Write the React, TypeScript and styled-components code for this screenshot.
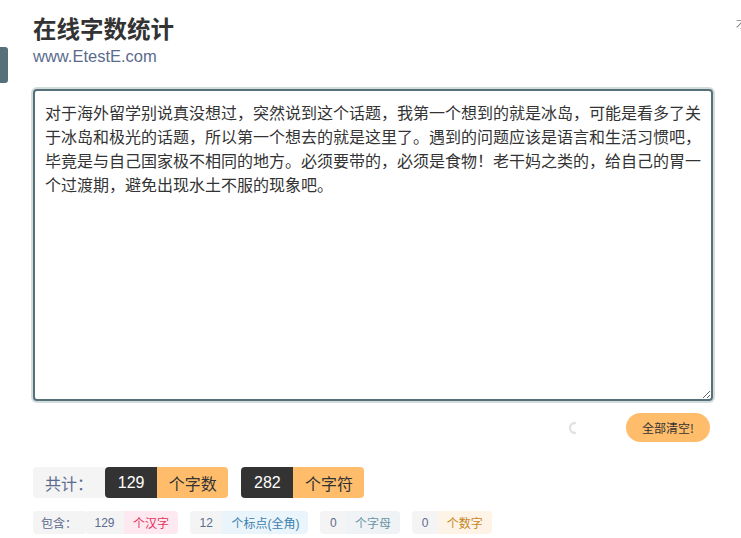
import { useEffect, useRef } from 'react';
import styled, { createGlobalStyle } from 'styled-components';

const GlobalStyle = createGlobalStyle`
  html, body {
    margin: 0;
    padding: 0;
    background: #fff;
    overflow: hidden;
  }
  body {
    font-family: "Liberation Sans", "Noto Sans CJK SC", sans-serif;
    color: #333;
  }
`;

const SOURCE_TEXT =
  '对于海外留学别说真没想过，突然说到这个话题，我第一个想到的就是冰岛，可能是看多了关于冰岛和极光的话题，所以第一个想去的就是这里了。遇到的问题应该是语言和生活习惯吧，毕竟是与自己国家极不相同的地方。必须要带的，必须是食物！老干妈之类的，给自己的胃一个过渡期，避免出现水土不服的现象吧。';

const Page = styled.div`
  width: 680px;
  margin-left: 33px;
  padding-top: 12px;
`;

const SideTab = styled.div`
  position: fixed;
  left: 0;
  top: 47px;
  width: 8px;
  height: 36px;
  background: #557078;
  border-radius: 0 3px 3px 0;
`;

const CornerGlyph = styled.span`
  position: fixed;
  left: 736px;
  top: 15px;
  font-size: 11px;
  color: #777;
  font-family: "Noto Sans CJK SC", sans-serif;
`;

const Header = styled.header`
  display: flex;
  flex-direction: column;
  margin-bottom: 23px;
`;

const Title = styled.h1`
  margin: 0;
  font-family: "Noto Sans CJK SC", sans-serif;
  font-size: 23.5px;
  font-weight: 700;
  line-height: 32px;
  color: #333;
`;

const SiteUrl = styled.div`
  font-family: "Liberation Sans", sans-serif;
  font-size: 16.5px;
  line-height: 20px;
  color: #5b6b8c;
  margin-top: 2px;
`;

const Editor = styled.textarea`
  display: block;
  box-sizing: border-box;
  width: 680px;
  height: 312px;
  margin: 0;
  padding: 9px 8px 10px 10px;
  border: 2px solid #557078;
  border-radius: 4px;
  box-shadow: 0 0 0 2px #d3dcdc;
  outline: none;
  font-family: "Noto Sans CJK SC", sans-serif;
  font-size: 16px;
  line-height: 24px;
  color: #333;
  caret-color: #222;
  background: #fff;
  resize: both;
  overflow: hidden;
`;

const ActionRow = styled.div`
  display: flex;
  justify-content: flex-end;
  align-items: center;
  gap: 45px;
  margin-top: 12px;
  padding-right: 3px;
`;

const Spinner = styled.svg`
  width: 14px;
  height: 14px;
`;

const ClearButton = styled.button`
  height: 29px;
  padding: 0 16px;
  border: none;
  border-radius: 15px;
  background: #ffbd6b;
  color: #333;
  font-family: "Noto Sans CJK SC", sans-serif;
  font-size: 12px;
  cursor: pointer;
`;

const StatRow = styled.div<{ $top: number }>`
  display: flex;
  align-items: center;
  margin-top: ${(p) => p.$top}px;
`;

const GroupList = styled.div<{ $gap: number }>`
  display: flex;
  gap: ${(p) => p.$gap}px;
`;

const Group = styled.div`
  display: flex;
  border-radius: 4px;
  overflow: hidden;
`;

const Cell = styled.span<{ $bg: string; $color: string; $size: number; $h: number; $pad: number }>`
  display: flex;
  align-items: center;
  height: ${(p) => p.$h}px;
  padding: 0 ${(p) => p.$pad}px;
  background: ${(p) => p.$bg};
  color: ${(p) => p.$color};
  font-family: "Liberation Sans", "Noto Sans CJK SC", sans-serif;
  font-size: ${(p) => p.$size}px;
  white-space: nowrap;
`;

const Label = styled(Cell)`
  border-radius: 4px 0 0 4px;
`;

const LABEL = '#5b6b8c';

const totals = [
  { num: '129', unit: '个字数' },
  { num: '282', unit: '个字符' },
];

const details = [
  { num: '129', unit: '个汉字', bg: '#fde9ef', color: '#e3335f' },
  { num: '12', unit: '个标点(全角)', bg: '#eaf4fb', color: '#3b7fae' },
  { num: '0', unit: '个字母', bg: '#eff3f5', color: '#6893a6' },
  { num: '0', unit: '个数字', bg: '#fdf4e7', color: '#c8861d' },
];

export default function App() {
  const ref = useRef<HTMLTextAreaElement>(null);

  useEffect(() => {
    const el = ref.current;
    if (el) {
      el.focus();
      el.setSelectionRange(el.value.length, el.value.length);
    }
  }, []);

  return (
    <>
      <GlobalStyle />
      <SideTab />
      <CornerGlyph>才</CornerGlyph>
      <Page>
        <Header>
          <Title>在线字数统计</Title>
          <SiteUrl>www.EtestE.com</SiteUrl>
        </Header>

        <Editor ref={ref} defaultValue={SOURCE_TEXT} spellCheck={false} />

        <ActionRow>
          <Spinner viewBox="0 0 14 14">
            <path d="M8 2 A5 5 0 0 0 8 12" fill="none" stroke="#e2e2e2" strokeWidth="2.4" strokeLinecap="round" />
          </Spinner>
          <ClearButton>全部清空!</ClearButton>
        </ActionRow>

        <StatRow $top={25}>
          <Label $bg="#f4f4f5" $color={LABEL} $size={16} $h={31} $pad={12}>共计：</Label>
          <GroupList $gap={13}>
            {totals.map((t) => (
              <Group key={t.unit}>
                <Cell $bg="#333" $color="#fff" $size={16} $h={31} $pad={12.75}>{t.num}</Cell>
                <Cell $bg="#ffbd6b" $color="#333" $size={16} $h={31} $pad={11.5}>{t.unit}</Cell>
              </Group>
            ))}
          </GroupList>
        </StatRow>

        <StatRow $top={13}>
          <Label $bg="#f4f4f5" $color={LABEL} $size={12} $h={23} $pad={8}>包含：</Label>
          <GroupList $gap={12}>
            {details.map((d) => (
              <Group key={d.unit}>
                <Cell $bg="#f4f4f5" $color={LABEL} $size={12} $h={23} $pad={9.5}>{d.num}</Cell>
                <Cell $bg={d.bg} $color={d.color} $size={12} $h={23} $pad={9}>{d.unit}</Cell>
              </Group>
            ))}
          </GroupList>
        </StatRow>
      </Page>
    </>
  );
}
